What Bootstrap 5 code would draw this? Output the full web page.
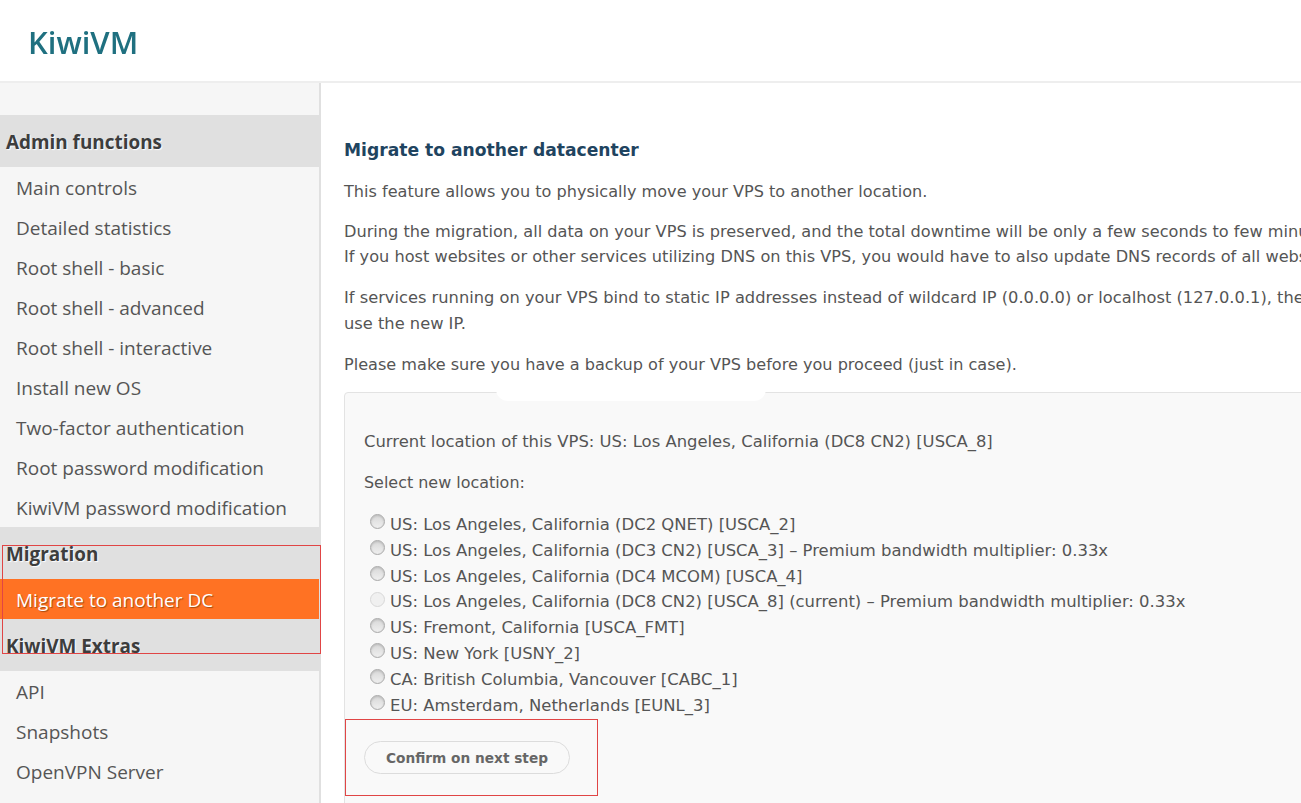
<!DOCTYPE html>
<html lang="en">
<head>
<meta charset="utf-8">
<title>KiwiVM</title>
<link href="https://cdn.jsdelivr.net/npm/bootstrap@5.3.0/dist/css/bootstrap.min.css" rel="stylesheet">
<style>
html,body{height:803px;overflow:hidden;background:#fff}
body{font-family:"DejaVu Sans",sans-serif;font-size:16.1px;color:#555;position:relative}
.kv-top{height:83px;border-bottom:2px solid #eee;padding:0 0 0 28px}
.kv-logo{font-family:"Open Sans",sans-serif;font-weight:600;font-size:31px;line-height:1;color:#1f7080;margin-top:3px;filter:blur(.35px)}
.kv-shell{height:720px}
.kv-side{width:321px;flex:none;background:#f6f6f6;border-right:2px solid #e0e0e0;padding-top:32px;font-family:"Open Sans",sans-serif}
.kv-head{height:52px;background:#e0e0e0;padding:2px 0 0 6px;font-size:18.9px;font-weight:700;color:#3d3d3d;text-shadow:1px 1px 1px #fff;display:flex;align-items:center}
.kv-clip{height:34px;overflow:hidden;align-self:flex-start;padding-top:12px;line-height:26px;box-sizing:border-box}
.kv-link{display:flex;align-items:center;height:40px;padding:2px 0 0 16px;font-size:19px;color:#555;text-decoration:none}
.kv-link.kv-on{background:#ff7223;color:#fff;text-shadow:1px 1px 1px #a34a10}
.kv-main{flex:1;min-width:0;padding:56px 0 0 23px;white-space:nowrap;overflow:hidden}
.kv-title{font-size:17.15px;font-weight:700;color:#1f4460;margin:0 0 18px;line-height:22px}
.kv-p{margin:0 0 15.5px;line-height:25.5px}
.kv-first{margin-bottom:14px}
.kv-mid{font-size:16.16px}
.kv-wide{font-size:16.28px}
.kv-last{margin-bottom:14.5px}
.kv-box{height:420px;width:1000px;background:#f9f9f9;border:1px solid #e3e3e3;border-radius:4px;padding:36px 19px 0}
.kv-box .kv-p{margin-bottom:15px}
.kv-box .kv-caps{font-size:16.42px;margin-bottom:16px}
.kv-plain{font-size:15.95px}
.kv-opts{margin-top:17px;font-size:16.45px}
.kv-opt{display:flex;align-items:center;height:25.8px}
.kv-radio{width:15px;height:15px;border-radius:50%;flex:none;margin:-7px 5px 0 6px;background:linear-gradient(#d8d8d8,#efefef);border:1px solid #a9a9a9;box-shadow:inset 0 1px 2px #bbb}
.kv-radio.kv-off{background:#f0f0f0;border-color:#d8d8d8;box-shadow:none}
.kv-btn{--bs-btn-font-size:13.7px;--bs-btn-font-weight:700;--bs-btn-color:#666;--bs-btn-border-color:#dcdcdc;--bs-btn-bg:#f9f9f9;--bs-btn-padding-x:21px;--bs-btn-padding-y:0;height:33px;border-radius:17px;margin-top:22px;padding-top:2px;display:block}
.kv-mark{position:absolute;border:1px solid #e04545;pointer-events:none}
.kv-smudge{position:absolute;background:#fff;left:496px;top:388px;width:270px;height:13px;border-radius:0 0 12px 12px}
</style>
</head>
<body>
<header class="kv-top d-flex align-items-center"><div class="kv-logo">KiwiVM</div></header>
<div class="kv-shell d-flex">
  <nav class="kv-side">
    <div class="kv-head">Admin functions</div>
    <a class="kv-link" href="#">Main controls</a>
    <a class="kv-link" href="#">Detailed statistics</a>
    <a class="kv-link" href="#">Root shell - basic</a>
    <a class="kv-link" href="#">Root shell - advanced</a>
    <a class="kv-link" href="#">Root shell - interactive</a>
    <a class="kv-link" href="#">Install new OS</a>
    <a class="kv-link" href="#">Two-factor authentication</a>
    <a class="kv-link" href="#">Root password modification</a>
    <a class="kv-link" href="#">KiwiVM password modification</a>
    <div class="kv-head">Migration</div>
    <a class="kv-link kv-on" href="#">Migrate to another DC</a>
    <div class="kv-head"><div class="kv-clip">KiwiVM Extras</div></div>
    <a class="kv-link" href="#">API</a>
    <a class="kv-link" href="#">Snapshots</a>
    <a class="kv-link" href="#">OpenVPN Server</a>
  </nav>
  <main class="kv-main">
    <h1 class="kv-title">Migrate to another datacenter</h1>
    <p class="kv-p kv-first">This feature allows you to physically move your VPS to another location.</p>
    <p class="kv-p kv-mid">During the migration, all data on your VPS is preserved, and the total downtime will be only a few seconds to few minutes.<br>If you host websites or other services utilizing DNS on this VPS, you would have to also update DNS records of all websites.</p>
    <p class="kv-p kv-wide">If services running on your VPS bind to static IP addresses instead of wildcard IP (0.0.0.0) or localhost (127.0.0.1), they must be changed to<br>use the new IP.</p>
    <p class="kv-p kv-last">Please make sure you have a backup of your VPS before you proceed (just in case).</p>
    <div class="kv-box">
      <p class="kv-p kv-caps">Current location of this VPS: US: Los Angeles, California (DC8 CN2) [USCA_8]</p>
      <p class="kv-p kv-plain">Select new location:</p>
      <div class="kv-opts">
        <div class="kv-opt"><span class="kv-radio"></span>US: Los Angeles, California (DC2 QNET) [USCA_2]</div>
        <div class="kv-opt"><span class="kv-radio"></span>US: Los Angeles, California (DC3 CN2) [USCA_3] – Premium bandwidth multiplier: 0.33x</div>
        <div class="kv-opt"><span class="kv-radio"></span>US: Los Angeles, California (DC4 MCOM) [USCA_4]</div>
        <div class="kv-opt"><span class="kv-radio kv-off"></span>US: Los Angeles, California (DC8 CN2) [USCA_8] (current) – Premium bandwidth multiplier: 0.33x</div>
        <div class="kv-opt"><span class="kv-radio"></span>US: Fremont, California [USCA_FMT]</div>
        <div class="kv-opt"><span class="kv-radio"></span>US: New York [USNY_2]</div>
        <div class="kv-opt"><span class="kv-radio"></span>CA: British Columbia, Vancouver [CABC_1]</div>
        <div class="kv-opt"><span class="kv-radio"></span>EU: Amsterdam, Netherlands [EUNL_3]</div>
      </div>
      <button type="button" class="btn kv-btn">Confirm on next step</button>
    </div>
  </main>
</div>
<div class="kv-smudge"></div>
<div class="kv-mark" style="left:2px;top:545px;width:319px;height:109px"></div>
<div class="kv-mark" style="left:345px;top:719px;width:253px;height:77px"></div>
<script src="https://cdn.jsdelivr.net/npm/bootstrap@5.3.0/dist/js/bootstrap.bundle.min.js"></script>
</body>
</html>
